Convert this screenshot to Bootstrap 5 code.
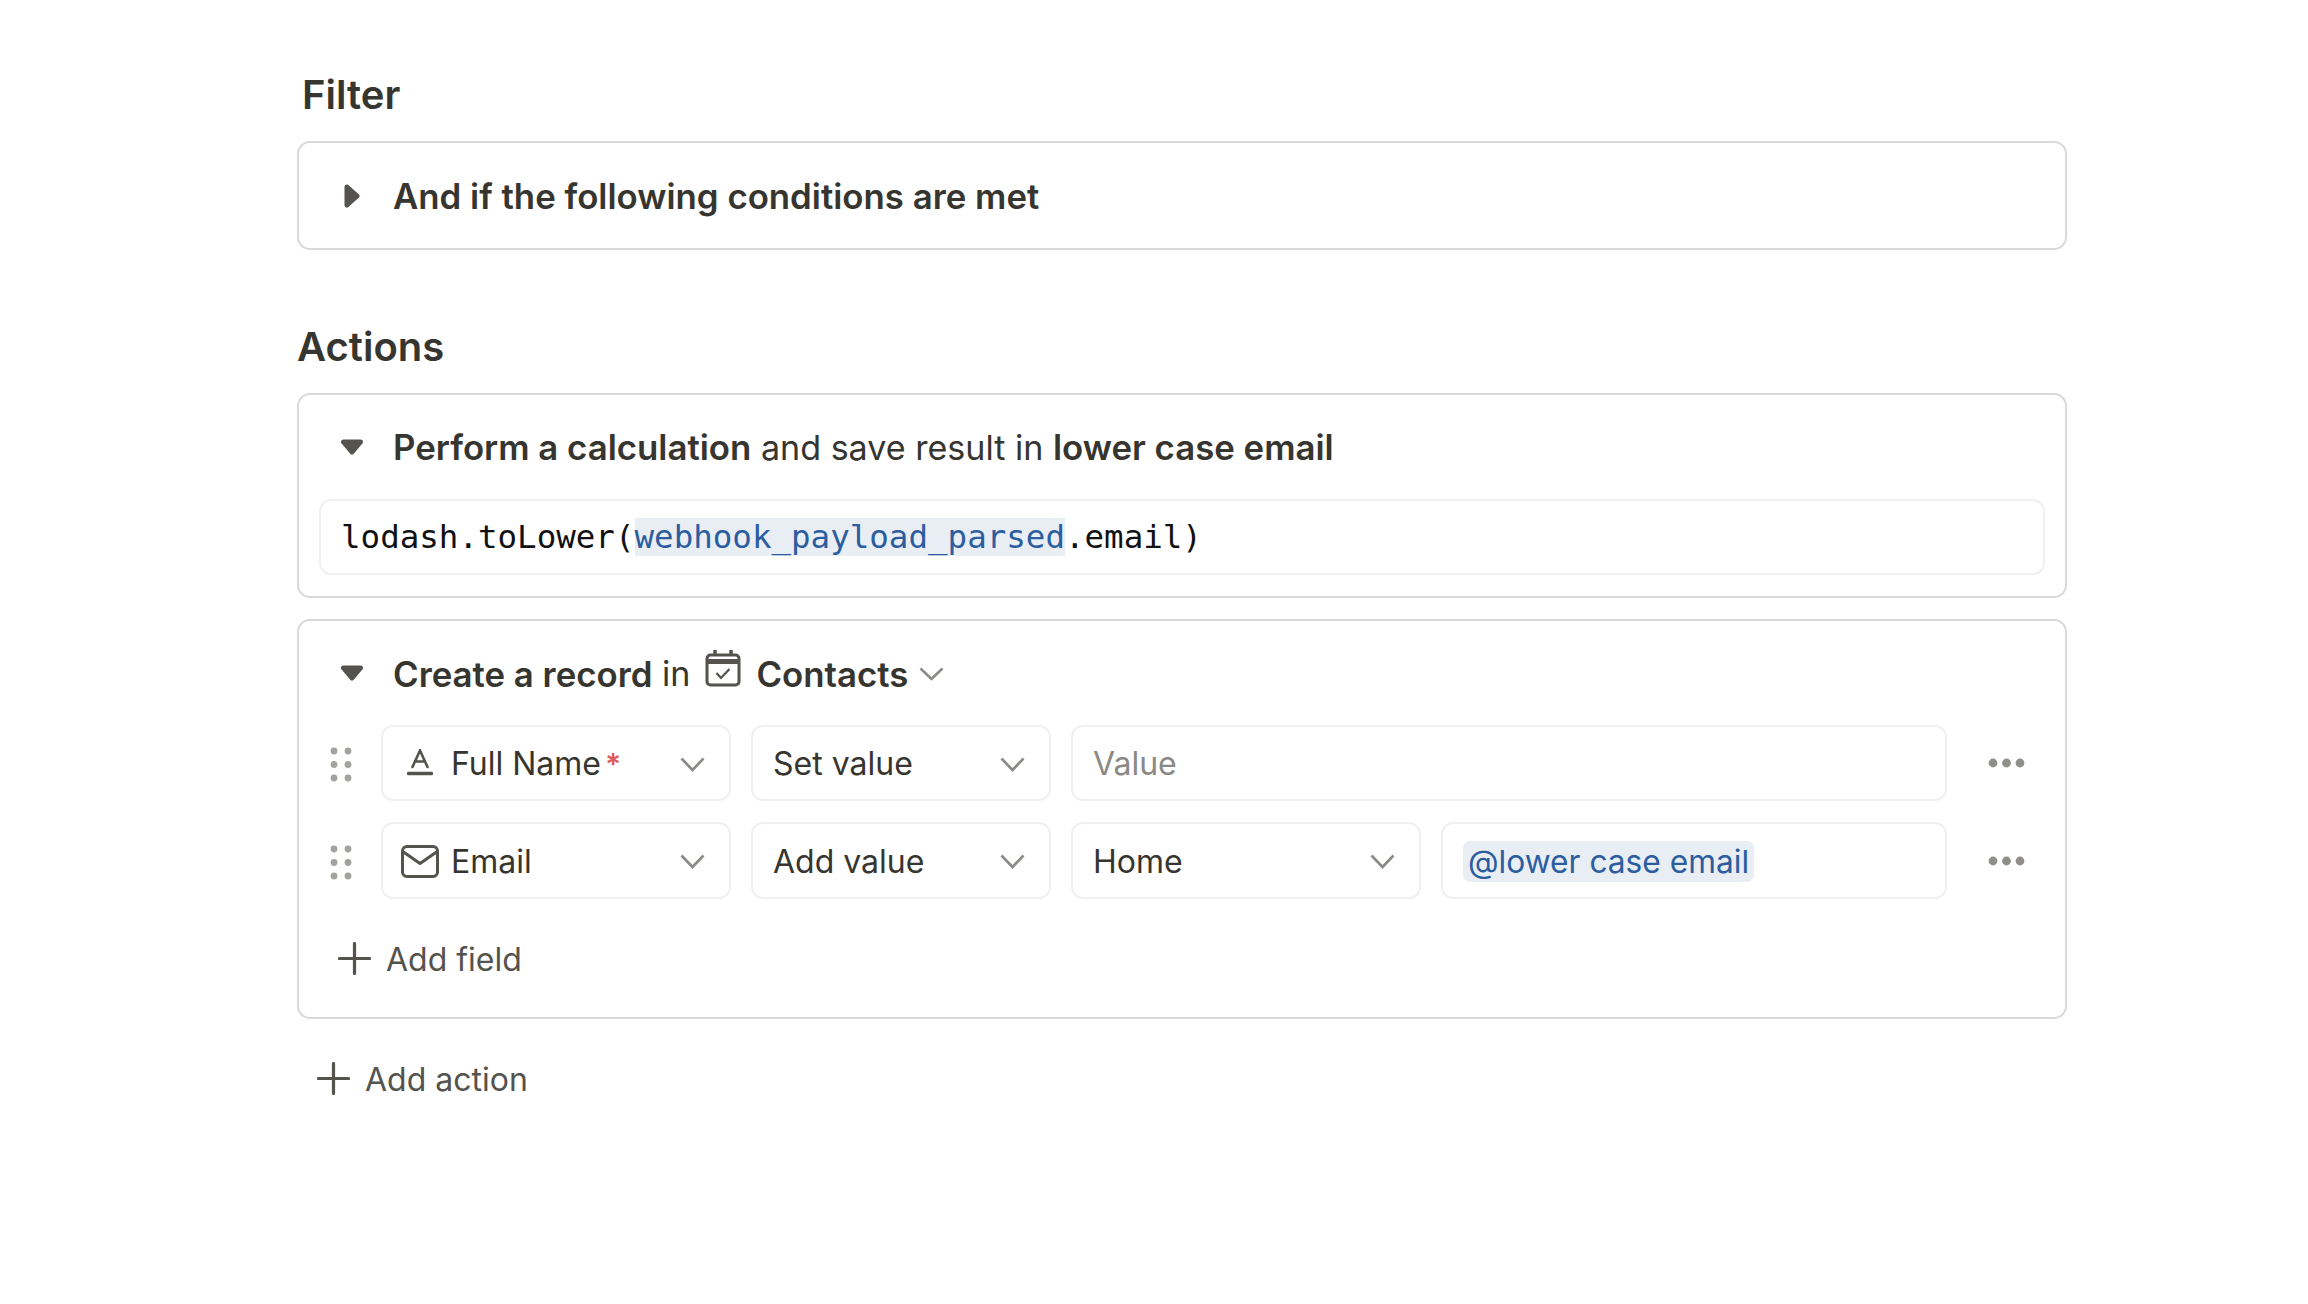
<!DOCTYPE html>
<html lang="en">
<head>
<meta charset="utf-8">
<title>Automation</title>
<link href="https://cdn.jsdelivr.net/npm/bootstrap@5.3.0/dist/css/bootstrap.min.css" rel="stylesheet">
<style>
html,body{background:#fff;margin:0}
body{font-family:Inter,"Liberation Sans",sans-serif;color:#37352f;font-size:32px;letter-spacing:0}
.canvas{width:1770px;margin-left:297px;padding-top:64px;height:1304px;overflow:hidden}
.sect-title{height:60px;margin:0 0 17px;font-size:40px;font-weight:600;line-height:62px;color:#37352f}
.sect-title.shifted{padding-left:5px}
.sect-title.second{margin-top:66px}
.flow-card{border:2px solid #d9d9d8;border-radius:13px;background:#fff;--bs-card-bg:#fff;--bs-card-border-radius:13px}
.flow-card + .flow-card{margin-top:21px}
.flow-head{height:104px;padding-left:41px}
.flow-head.tall{height:105px}
.head-text{margin-left:29px;padding-top:1px;line-height:40px;white-space:nowrap;font-size:34.1px}
.head-strong{font-size:34.8px;font-weight:600}
.caret-slot{width:24px;flex:none}
.code-line{height:76px;margin:0 20px 21px;border:2px solid #f0f0ef;border-radius:12px;padding-left:20px;font-family:"DejaVu Sans Mono","Liberation Mono",monospace;font-size:32.5px;color:#111;white-space:nowrap}
.code-ref{color:#2b5d9f;background:#e9eef5;line-height:38px}
.field-row + .field-row{margin-top:21px}
.grip{width:82px;flex:none;padding-left:31px}
.fbox{height:77px;border:2px solid #f0f0ef;border-radius:12px;padding:2px 24px 0 20px;white-space:nowrap;flex:none}
.row-first .fbox{height:76px}
.w-name{width:350px;margin-right:20px}
.w-op{width:300px;margin-right:20px}
.w-val{width:876px}
.w-type{width:350px;margin-right:20px}
.w-ref{width:506px;padding-left:20px}
.fic{width:50px;flex:none;display:flex;justify-content:center}
.name-box{padding-left:12px}
.fname{margin-left:6px}
.star{color:#e05b5b;font-size:30px;font-weight:600;line-height:1;margin-left:4px;align-self:flex-start;margin-top:20px}
.holder{color:#8a8984}
.ref-chip{color:#2b5d9f;background:#e9eef5;border-radius:7px;height:41px;line-height:41px;padding:0 5px;font-size:31.7px}
.more{margin-left:41px;flex:none}
.add-line{height:76px;color:#55534e;white-space:nowrap}
.add-line span{padding-top:3px}
.add-field{margin-top:21px;margin-bottom:21px;padding-left:39px}
.add-action{margin-top:21px;padding-left:20px}
.add-line svg{margin-right:15px}
.cal-ic{margin:-12px 15px 0 15px}
.head-chev{margin-left:11px}
.a-ic{margin-top:-3px}
</style>
</head>
<body>
<main class="canvas">
  <h2 class="sect-title shifted">Filter</h2>
  <section class="card flow-card">
    <div class="flow-head tall d-flex align-items-center">
      <span class="caret-slot d-flex justify-content-center"><svg width="16" height="24" viewBox="0 0 16 24"><path d="M3 3 L13 12 L3 21 Z" fill="#55534e" stroke="#55534e" stroke-width="5" stroke-linejoin="round"/></svg></span>
      <span class="head-text head-strong">And if the following conditions are met</span>
    </div>
  </section>

  <h2 class="sect-title second">Actions</h2>
  <section class="card flow-card">
    <div class="flow-head d-flex align-items-center">
      <span class="caret-slot d-flex justify-content-center"><svg width="24" height="16" viewBox="0 0 24 16"><path d="M3.5 3 H20.5 L12 13 Z" fill="#55534e" stroke="#55534e" stroke-width="5" stroke-linejoin="round"/></svg></span>
      <span class="head-text"><span class="head-strong">Perform a calculation</span> and save result in <span class="head-strong">lower case email</span></span>
    </div>
    <div class="code-line d-flex align-items-center"><span>lodash.toLower(<span class="code-ref">webhook_payload_parsed</span>.email)</span></div>
  </section>

  <section class="card flow-card">
    <div class="flow-head d-flex align-items-center">
      <span class="caret-slot d-flex justify-content-center"><svg width="24" height="16" viewBox="0 0 24 16"><path d="M3.5 3 H20.5 L12 13 Z" fill="#55534e" stroke="#55534e" stroke-width="5" stroke-linejoin="round"/></svg></span>
      <span class="head-text d-flex align-items-center"><span class="head-strong">Create a record</span>&nbsp;in
        <svg class="cal-ic" width="36" height="38" viewBox="0 0 36 38" fill="none" stroke="#55534e" stroke-width="3"><rect x="2" y="6" width="32" height="30" rx="3.5"/><path d="M2 12.5 H34" stroke-width="5"/><path d="M10 1 V7 M26 1 V7" stroke-width="3.5"/><path d="M11.5 24 L16 29 L24.5 20" stroke-width="2.2"/></svg>
        <span class="head-strong">Contacts</span>
        <svg class="head-chev" width="25" height="14" viewBox="0 0 25 14" fill="none" stroke="#8b8a86" stroke-width="2.6"><path d="M1.5 1.5 L12.5 12 L23.5 1.5"/></svg></span>
    </div>

    <div class="field-row row-first d-flex align-items-center">
      <span class="grip"><svg width="22" height="36" viewBox="0 0 22 36" fill="#a3a29f"><circle cx="4" cy="4" r="3.4"/><circle cx="18" cy="4" r="3.4"/><circle cx="4" cy="17.5" r="3.4"/><circle cx="18" cy="17.5" r="3.4"/><circle cx="4" cy="31" r="3.4"/><circle cx="18" cy="31" r="3.4"/></svg></span>
      <div class="fbox w-name name-box d-flex align-items-center">
        <span class="fic"><svg class="a-ic" width="26" height="27" viewBox="0 0 26 27" fill="none" stroke="#55534e" stroke-width="2.6" stroke-linecap="round"><path d="M5.5 18 L13 1.5 L20.5 18 M8.5 12.5 H17.5"/><path d="M1.5 24.5 H24.5" stroke-width="3.4"/></svg></span>
        <span class="fname">Full Name</span><span class="star">*</span>
        <svg class="ms-auto" width="25" height="15" viewBox="0 0 25 15" fill="none" stroke="#8b8a86" stroke-width="2.6"><path d="M1.5 1.5 L12.5 13 L23.5 1.5"/></svg>
      </div>
      <div class="fbox w-op d-flex align-items-center">
        <span>Set value</span>
        <svg class="ms-auto" width="25" height="15" viewBox="0 0 25 15" fill="none" stroke="#8b8a86" stroke-width="2.6"><path d="M1.5 1.5 L12.5 13 L23.5 1.5"/></svg>
      </div>
      <div class="fbox w-val d-flex align-items-center"><span class="holder">Value</span></div>
      <svg class="more" width="37" height="10" viewBox="0 0 37 10" fill="#8f8e8a"><circle cx="5" cy="5" r="4.4"/><circle cx="18.5" cy="5" r="4.4"/><circle cx="32" cy="5" r="4.4"/></svg>
    </div>

    <div class="field-row d-flex align-items-center">
      <span class="grip"><svg width="22" height="36" viewBox="0 0 22 36" fill="#a3a29f"><circle cx="4" cy="4" r="3.4"/><circle cx="18" cy="4" r="3.4"/><circle cx="4" cy="17.5" r="3.4"/><circle cx="18" cy="17.5" r="3.4"/><circle cx="4" cy="31" r="3.4"/><circle cx="18" cy="31" r="3.4"/></svg></span>
      <div class="fbox w-name name-box d-flex align-items-center">
        <span class="fic"><svg width="38" height="33" viewBox="0 0 38 33" fill="none" stroke="#55534e" stroke-width="3" stroke-linejoin="round"><rect x="1.5" y="1.5" width="35" height="30" rx="4.5"/><path d="M2.5 7 L19 18.5 L35.5 7"/></svg></span>
        <span class="fname">Email</span>
        <svg class="ms-auto" width="25" height="15" viewBox="0 0 25 15" fill="none" stroke="#8b8a86" stroke-width="2.6"><path d="M1.5 1.5 L12.5 13 L23.5 1.5"/></svg>
      </div>
      <div class="fbox w-op d-flex align-items-center">
        <span>Add value</span>
        <svg class="ms-auto" width="25" height="15" viewBox="0 0 25 15" fill="none" stroke="#8b8a86" stroke-width="2.6"><path d="M1.5 1.5 L12.5 13 L23.5 1.5"/></svg>
      </div>
      <div class="fbox w-type d-flex align-items-center">
        <span>Home</span>
        <svg class="ms-auto" width="25" height="15" viewBox="0 0 25 15" fill="none" stroke="#8b8a86" stroke-width="2.6"><path d="M1.5 1.5 L12.5 13 L23.5 1.5"/></svg>
      </div>
      <div class="fbox w-ref d-flex align-items-center"><span class="ref-chip">@lower case email</span></div>
      <svg class="more" width="37" height="10" viewBox="0 0 37 10" fill="#8f8e8a"><circle cx="5" cy="5" r="4.4"/><circle cx="18.5" cy="5" r="4.4"/><circle cx="32" cy="5" r="4.4"/></svg>
    </div>

    <div class="add-line add-field d-flex align-items-center">
      <svg width="33" height="33" viewBox="0 0 33 33" fill="none" stroke="#55534e" stroke-width="3.2" stroke-linecap="round"><path d="M16.5 1.5 V31.5 M1.5 16.5 H31.5"/></svg>
      <span>Add field</span>
    </div>
  </section>

  <div class="add-line add-action d-flex align-items-center">
    <svg width="33" height="33" viewBox="0 0 33 33" fill="none" stroke="#55534e" stroke-width="3.2" stroke-linecap="round"><path d="M16.5 1.5 V31.5 M1.5 16.5 H31.5"/></svg>
    <span>Add action</span>
  </div>
</main>
<script src="https://cdn.jsdelivr.net/npm/bootstrap@5.3.0/dist/js/bootstrap.bundle.min.js"></script>
</body>
</html>
